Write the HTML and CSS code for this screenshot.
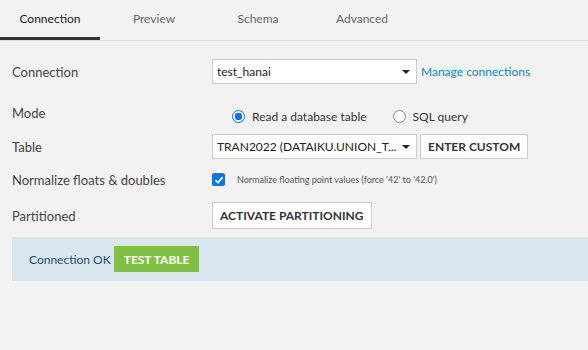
FILE: index.html
```html
<!DOCTYPE html>
<html lang="en">
<head>
  <meta charset="UTF-8" />
  <title>Dataset settings</title>
  <link rel="stylesheet" href="styles.css">
</head>
<body>
  <div class="tabs">
    <div class="tab active">Connection</div>
    <div class="tab">Preview</div>
    <div class="tab">Schema</div>
    <div class="tab">Advanced</div>
  </div>

  <div class="settings">
    <div class="row row-connection">
      <div class="label">Connection</div>
      <div class="select">
        <span>test_hanai</span>
        <span class="caret"></span>
      </div>
      <a class="link" href="#">Manage connections</a>
    </div>

    <div class="row row-mode">
      <div class="label">Mode</div>
      <div class="radios">
        <label class="radio"><span class="dot checked"></span>Read a database table</label>
        <label class="radio"><span class="dot"></span>SQL query</label>
      </div>
    </div>

    <div class="row row-table">
      <div class="label">Table</div>
      <div class="select">
        <span>TRAN2022 (DATAIKU.UNION_T...</span>
        <span class="caret"></span>
      </div>
      <button class="btn">ENTER CUSTOM</button>
    </div>

    <div class="row row-normalize">
      <div class="label">Normalize floats &amp; doubles</div>
      <span class="checkbox">
        <svg width="10" height="10" viewBox="0 0 10 10"><path d="M1.5 5.2 L4 7.6 L8.6 2.2" fill="none" stroke="#fff" stroke-width="1.8"/></svg>
      </span>
      <span class="hint">Normalize floating point values (force '42' to '42.0')</span>
    </div>

    <div class="row row-partition">
      <div class="label">Partitioned</div>
      <button class="btn btn-tall">ACTIVATE PARTITIONING</button>
    </div>

    <div class="status">
      <span>Connection OK</span>
      <button class="btn-green">TEST TABLE</button>
    </div>
  </div>
</body>
</html>
```

FILE: styles.css
```css
body {
  margin: 0;
  background-color: #f2f2f2;
  font-family: Lato, "Open Sans", sans-serif;
  color: #333;
}
.tabs {
  display: flex;
  gap: 4px;
  height: 40px;
  border-bottom: 1px solid #ddd;
}
.tab {
  width: 100px;
  text-align: center;
  line-height: 37px;
  font-size: 12px;
  color: #666;
  border-bottom: 3px solid transparent;
}
.tab.active {
  color: #222;
  border-bottom-color: #333;
}
.settings {
  padding: 18px 0 0 12px;
}
.row {
  display: flex;
  align-items: center;
}
.label {
  width: 200px;
  font-size: 13px;
  color: #444;
}
.select {
  width: 205px;
  height: 25px;
  box-sizing: border-box;
  background: #fff;
  border: 1px solid #ccc;
  display: flex;
  align-items: center;
  justify-content: space-between;
  padding: 0 4px 0 4px;
  font-size: 12px;
  color: #222;
}
.caret {
  width: 0;
  height: 0;
  border-left: 4px solid transparent;
  border-right: 4px solid transparent;
  border-top: 4px solid #222;
  margin-right: 2px;
}
.link {
  margin-left: 4px;
  font-size: 12px;
  color: #0f88cc;
  text-decoration: none;
}
.row-mode {
  margin-top: 16px;
  height: 26px;
  align-items: flex-start;
}
.row-mode .label {
  line-height: 26px;
}
.radios {
  display: flex;
  padding-top: 9px;
  padding-left: 20px;
}
.radio {
  display: flex;
  align-items: center;
  font-size: 12px;
  color: #333;
  margin-right: 26px;
}
.dot {
  width: 11px;
  height: 11px;
  border: 1px solid #888;
  border-radius: 50%;
  background: #fff;
  margin-right: 7px;
  box-sizing: content-box;
}
.dot.checked {
  border-color: #0075ff;
  background: radial-gradient(circle, #0075ff 0 3.5px, #fff 4px);
}
.row-table {
  margin-top: 8px;
}
.btn {
  margin-left: 3px;
  height: 25px;
  background: #fff;
  border: 1px solid #ccc;
  font-family: Lato, sans-serif;
  font-weight: bold;
  font-size: 12px;
  color: #333;
  padding: 0 7px;
}
.row-normalize {
  margin-top: 8px;
  height: 25px;
}
.checkbox {
  width: 13px;
  height: 13px;
  border-radius: 2px;
  background: #0075ff;
  display: flex;
  align-items: center;
  justify-content: center;
}
.hint {
  margin-left: 12px;
  font-size: 9px;
  color: #555;
}
.row-partition {
  margin-top: 10px;
}
.btn-tall {
  margin-left: 0;
  height: 27px;
  padding: 0 7px;
}
.status {
  margin-top: 8px;
  height: 44px;
  background: #d9e6ed;
  display: flex;
  align-items: center;
  padding-left: 17px;
  font-size: 12px;
  color: #1d4f74;
}
.btn-green {
  margin-left: 3px;
  height: 26px;
  background: #80c041;
  border: none;
  color: #fff;
  font-family: Lato, sans-serif;
  font-weight: bold;
  font-size: 12px;
  padding: 0 10px;
}
```
